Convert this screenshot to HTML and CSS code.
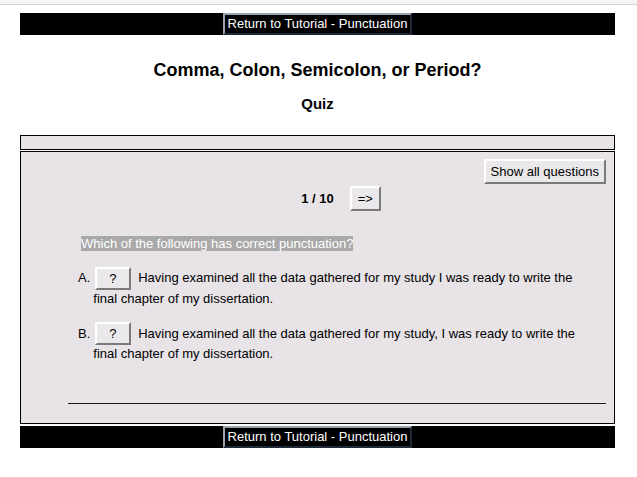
FILE: index.html
```html
<!DOCTYPE html>
<html>
<head>
<meta charset="utf-8">
<title>Quiz</title>
<link rel="stylesheet" href="styles.css">
</head>
<body>
<div class="chrome"></div>
<div class="page">
  <div class="nav"><button class="navbtn">Return to Tutorial - Punctuation</button></div>
  <h1 class="title">Comma, Colon, Semicolon, or Period?</h1>
  <h2 class="subtitle">Quiz</h2>
  <div class="box box-top"></div>
  <div class="box box-main">
    <div class="toolbar"><button class="btn show">Show all questions</button></div>
    <div class="pager">
      <span></span>
      <span class="count">1 / 10</span>
      <span><button class="btn next">=&gt;</button></span>
    </div>
    <p class="question"><span class="hl">Which of the following has correct punctuation?</span></p>
    <ol class="options">
      <li class="option"><span class="letter">A.</span><div class="body"><button class="btn q">?</button> Having examined all the data gathered for my study I was ready to write the final chapter of my dissertation.</div></li>
      <li class="option"><span class="letter">B.</span><div class="body"><button class="btn q">?</button> Having examined all the data gathered for my study, I was ready to write the final chapter of my dissertation.</div></li>
    </ol>
    <hr class="rule">
  </div>
  <div class="nav"><button class="navbtn">Return to Tutorial - Punctuation</button></div>
</div>
</body>
</html>
```

FILE: styles.css
```css
html, body {
  margin: 0;
  padding: 0;
  background: #fff;
  font-family: "Liberation Sans", Arial, sans-serif;
  font-size: 13px;
  color: #000;
}
.chrome {
  height: 4px;
  background: #f4f4f6;
  border-bottom: 1px solid #d2d2d4;
}
.page {
  width: 595px;
  margin: 8px 0 0 20px;
}
.nav {
  background: #000;
  height: 22px;
  display: flex;
  justify-content: center;
}
.navbtn {
  font-family: "Liberation Sans", Arial, sans-serif;
  font-size: 13px;
  line-height: 18px;
  height: 22px;
  padding: 0 3px;
  margin: 0;
  background: #000;
  color: #fff;
  border: 2px solid;
  border-color: #9aa4ae #1f2a38 #1f2a38 #9aa4ae;
}
.title {
  margin: 24px 0 0;
  font-size: 18px;
  line-height: 22px;
  text-align: center;
  font-weight: bold;
}
.subtitle {
  margin: 14px 0 22px;
  font-size: 15px;
  line-height: 18px;
  text-align: center;
  font-weight: bold;
}
.box {
  border: 1px solid #000;
  background: #e7e3e6;
}
.box-top {
  height: 13px;
  margin-bottom: 1px;
}
.box-main {
  padding: 7px 8px 19px 0;
}
.btn {
  font-family: "Liberation Sans", Arial, sans-serif;
  font-size: 13px;
  line-height: 15px;
  margin: 0;
  background: #ebe8eb;
  color: #000;
  border: 2px solid;
  border-color: #fff #7a7a7a #7a7a7a #fff;
}
.toolbar {
  display: flex;
  justify-content: flex-end;
  margin-bottom: 2px;
}
.show {
  height: 25px;
  padding: 3px 5px;
}
.pager {
  display: grid;
  grid-template-columns: 1fr auto 1fr;
  align-items: center;
  height: 25px;
  padding-left: 8px;
}
.count {
  font-weight: bold;
  line-height: 16px;
}
.next {
  height: 25px;
  padding: 3px 6px;
  margin-left: 16px;
}
.question {
  margin: 25px 0 0 60px;
  line-height: 16px;
}
.hl {
  background: #a9a9a9;
  color: #fff;
}
.options {
  list-style: none;
  margin: 16px 0 0;
  padding: 0 11px 0 0;
}
.option {
  display: grid;
  grid-template-columns: auto 1fr;
  line-height: 20px;
}
.option + .option {
  margin-top: 15px;
}
.letter {
  margin: 0 3px 0 57px;
}
.q {
  height: 23px;
  padding: 2px 12px;
  margin: -2px 4px -1px 2px;
  vertical-align: middle;
}
.rule {
  margin: 39px 0 0 47px;
  height: 0;
  border: none;
  border-top: 1px solid #1a1a1a;
}
.box-main + .nav {
  margin-top: 2px;
}
```
